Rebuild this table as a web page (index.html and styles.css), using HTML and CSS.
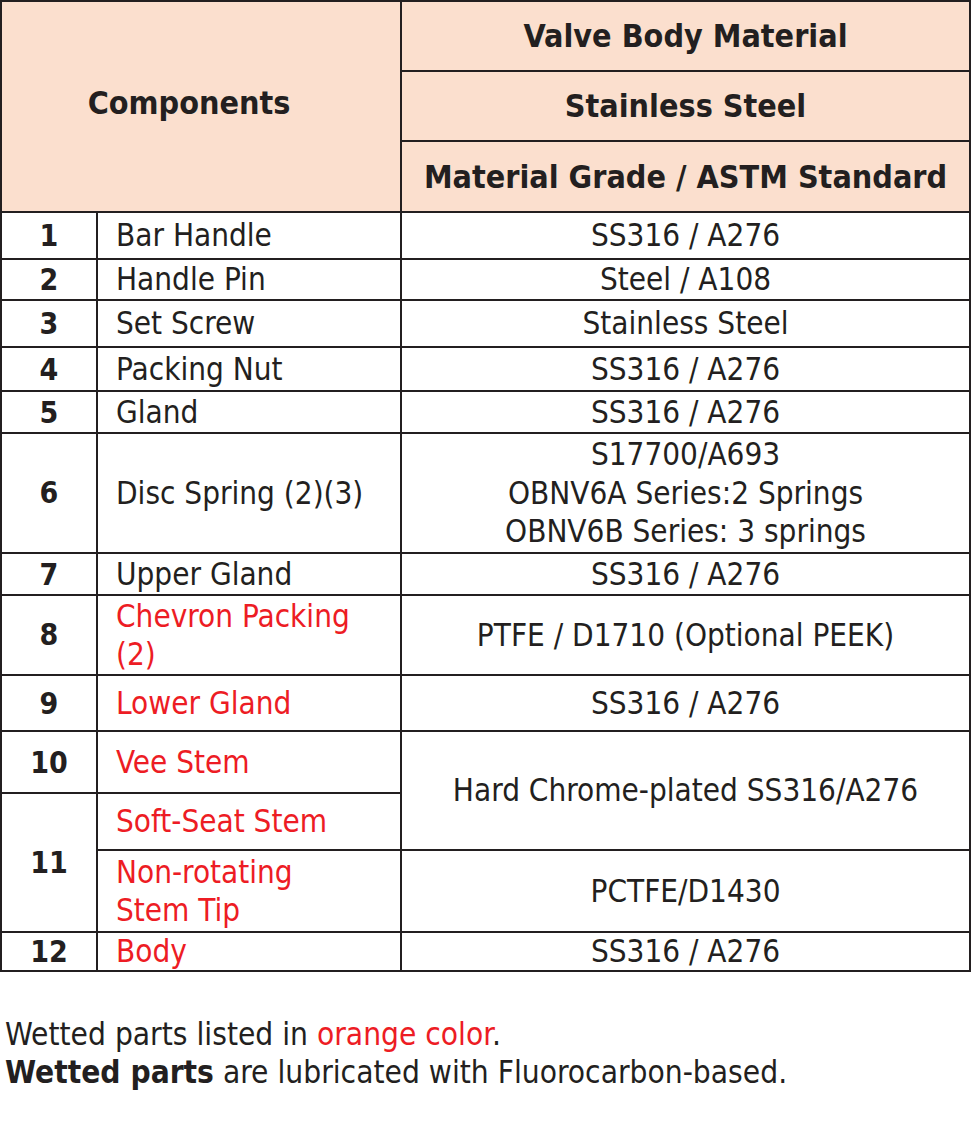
FILE: index.html
```html
<!DOCTYPE html>
<html lang="en">
<head>
<meta charset="utf-8">
<title>Valve Components</title>
<link rel="stylesheet" href="styles.css">
</head>
<body>
<table class="spec">
  <colgroup>
    <col class="c-num">
    <col class="c-name">
    <col class="c-mat">
  </colgroup>
  <thead>
    <tr class="r-h1"><th colspan="2" rowspan="3" class="comp">Components</th><th>Valve Body Material</th></tr>
    <tr class="r-h2"><th>Stainless Steel</th></tr>
    <tr class="r-h3"><th>Material Grade / ASTM Standard</th></tr>
  </thead>
  <tbody>
    <tr class="r1"><td class="num">1</td><td class="name">Bar Handle</td><td class="mat">SS316 / A276</td></tr>
    <tr class="r2"><td class="num">2</td><td class="name">Handle Pin</td><td class="mat">Steel / A108</td></tr>
    <tr class="r3"><td class="num">3</td><td class="name">Set Screw</td><td class="mat">Stainless Steel</td></tr>
    <tr class="r4"><td class="num">4</td><td class="name">Packing Nut</td><td class="mat">SS316 / A276</td></tr>
    <tr class="r5"><td class="num">5</td><td class="name">Gland</td><td class="mat">SS316 / A276</td></tr>
    <tr class="r6 multi"><td class="num">6</td><td class="name">Disc Spring (2)(3)</td><td class="mat">S17700/A693<br>OBNV6A Series:2 Springs<br>OBNV6B Series: 3 springs</td></tr>
    <tr class="r7"><td class="num">7</td><td class="name">Upper Gland</td><td class="mat">SS316 / A276</td></tr>
    <tr class="r8 multi"><td class="num">8</td><td class="name wet">Chevron Packing<br>(2)</td><td class="mat">PTFE / D1710 (Optional PEEK)</td></tr>
    <tr class="r9"><td class="num">9</td><td class="name wet">Lower Gland</td><td class="mat">SS316 / A276</td></tr>
    <tr class="r10"><td class="num">10</td><td class="name wet">Vee Stem</td><td class="mat" rowspan="2">Hard Chrome-plated SS316/A276</td></tr>
    <tr class="r11a"><td class="num" rowspan="2">11</td><td class="name wet">Soft-Seat Stem</td></tr>
    <tr class="r11b multi"><td class="name wet">Non-rotating<br>Stem Tip</td><td class="mat">PCTFE/D1430</td></tr>
    <tr class="r12"><td class="num">12</td><td class="name wet">Body</td><td class="mat">SS316 / A276</td></tr>
  </tbody>
</table>
<div class="note">
  <p>Wetted parts listed in <span class="wet">orange color</span>.</p>
  <p><strong>Wetted parts</strong> are lubricated with Fluorocarbon-based.</p>
</div>
</body>
</html>
```

FILE: styles.css
```css
html, body {
  margin: 0;
  padding: 0;
  background: #ffffff;
}

body {
  color: #231f20;
  font-family: "DejaVu Sans Condensed", "DejaVu Sans", sans-serif;
  font-stretch: semi-condensed;
}

.spec {
  width: 971px;
  table-layout: fixed;
  border-collapse: separate;
  border-spacing: 0;
  border-top: 2px solid #231f20;
  border-left: 2px solid #231f20;
}

.c-num { width: 96px; }
.c-name { width: 304px; }
.c-mat { width: 569px; }

.spec th,
.spec td {
  border-right: 2px solid #231f20;
  border-bottom: 2px solid #231f20;
  padding: 0;
  vertical-align: middle;
}

.spec th {
  background: #fbdfce;
  font-weight: bold;
  font-size: 32px;
  line-height: 36px;
  text-align: center;
}

.spec th.comp {
  padding-right: 24px;
  padding-bottom: 8px;
}

.spec td {
  font-size: 31.2px;
  line-height: 37px;
}

.spec .multi td {
  line-height: 38.5px;
}

.spec td.num {
  font-weight: bold;
  font-size: 30px;
  text-align: center;
}

.spec td.name {
  text-align: left;
  padding-left: 18px;
}

.spec td.mat {
  text-align: center;
}

.wet {
  color: #ed1c24;
}

.r-h1 { height: 70px; }
.r-h2 { height: 70px; }
.r-h3 { height: 71px; }
.r1 { height: 47px; }
.r2 { height: 41px; }
.r3 { height: 47px; }
.r4 { height: 44px; }
.r5 { height: 42px; }
.r6 { height: 120px; }
.r7 { height: 42px; }
.r8 { height: 80px; }
.r9 { height: 56px; }
.r10 { height: 62px; }
.r11a { height: 57px; }
.r11b { height: 82px; }
.r12 { height: 39px; }

.note {
  margin-top: 44px;
  padding-left: 5px;
  font-size: 31.4px;
  line-height: 37.5px;
}

.note p {
  margin: 0;
}

.note strong {
  font-weight: bold;
}
```
